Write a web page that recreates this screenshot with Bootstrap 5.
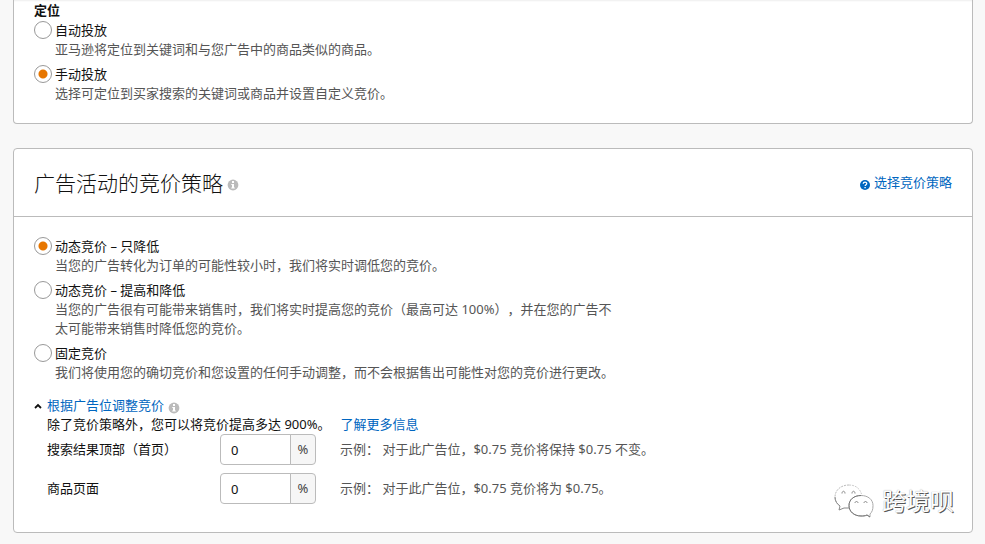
<!DOCTYPE html>
<html lang="zh-CN">
<head>
<meta charset="utf-8">
<meta name="viewport" content="width=device-width, initial-scale=1">
<title>广告活动的竞价策略</title>
<link rel="stylesheet" href="https://cdn.jsdelivr.net/npm/bootstrap@5.3.0/dist/css/bootstrap.min.css">
<style>
body { background: #f8f8f8; color: #111; font: 13px/19px "Noto Sans", "Noto Sans CJK SC", sans-serif; text-spacing-trim: space-all; }
a, .toggle-link { color: #0066c0; text-decoration: none; }
a:hover, .toggle-link:hover { text-decoration: underline; }
.page { padding: 0 12px 11px 13px; }
.panel { border: 1px solid #bbb; border-radius: 4px; background: #fff; color: #111; }
.panel-top { border-top: 0; border-top-left-radius: 0; border-top-right-radius: 0; padding: 1px 20px 14px; box-shadow: inset 0 2px 2px -1px #eee; }
.target-title { font-size: 13px; line-height: 19px; margin-bottom: 1px; }
.panel-head { padding: 0 20px; min-height: 68px; border-bottom: 1px solid #bbb; }
.panel-title { font-size: 21px; line-height: 30px; font-weight: 300; }
.panel-body { padding: 20px 20px 28px; }
.option { display: grid; grid-template-columns: 18px 1fr; column-gap: 3px; margin-bottom: 6px; }
.option .form-check-input { width: 18px; height: 18px; margin: 0; border: 1px solid #999; float: none; }
.option .form-check-input:checked { background: #fff radial-gradient(circle, #e77600 0 4px, #fff 5px); border-color: #999; }
.option .desc { grid-column: 2; max-width: 562px; }
.muted { color: #555; }
.placement { padding-left: 13px; }
.toggle-link { border: 0; background: none; padding: 0; }
.chevron { width: 8px; height: 8px; margin-right: 5px; }
.more-link { margin-left: 10px; }
.bid-row { display: grid; grid-template-columns: 173px 96px 1fr; align-items: center; margin-bottom: 8px; }
.bid-row .form-control, .bid-row .input-group-text { height: 31px; border-color: #bbb; border-radius: 4px; font-size: 13px; line-height: 19px; color: #111; }
.bid-row .form-control { padding: 0 10px; }
.bid-row .input-group-text { width: 26px; padding: 0; justify-content: center; background: #f6f6f6; color: #444; }
.example { padding-left: 24px; }
.watermark { position: absolute; right: 31px; bottom: 26px; font-size: 24px; line-height: 34px; color: #fff; text-shadow: 1px 1px 0 #555, 0 0 1px #999; pointer-events: none; }
</style>
<script defer src="https://cdn.jsdelivr.net/npm/bootstrap@5.3.0/dist/js/bootstrap.bundle.min.js"></script>
</head>
<body>
<main class="page position-relative">
  <section class="panel panel-top mb-4">
    <fieldset>
      <legend class="float-none fw-bold target-title">定位</legend>
      <div class="option">
        <input class="form-check-input" type="radio" name="target" id="auto" aria-describedby="auto-d">
        <label for="auto">自动投放</label>
        <div class="desc muted" id="auto-d">亚马逊将定位到关键词和与您广告中的商品类似的商品。</div>
      </div>
      <div class="option">
        <input class="form-check-input" type="radio" name="target" id="manual" aria-describedby="manual-d" checked>
        <label for="manual">手动投放</label>
        <div class="desc muted" id="manual-d">选择可定位到买家搜索的关键词或商品并设置自定义竞价。</div>
      </div>
    </fieldset>
  </section>

  <section class="panel">
    <header class="panel-head d-flex align-items-center justify-content-between">
      <div class="d-flex align-items-center">
        <h1 class="panel-title mb-0" id="strategy-title">广告活动的竞价策略</h1>
        <svg class="ms-1 mt-1" width="12" height="12" viewBox="0 0 12 12" aria-hidden="true"><circle cx="6" cy="6" r="5.4" fill="#bbb"/><path d="M5 2h2v2H5zM4.300 5H7v3.500h.8v1H4.200v-1H5V6h-.7z" fill="#fff"/></svg>
      </div>
      <a href="#" class="d-flex align-items-center"><svg class="me-1 mt-1" width="10" height="10" viewBox="0 0 10 10" aria-hidden="true"><circle cx="5" cy="5" r="5" fill="#0066c0"/><path d="M3.200 3.800C3.300 1.500 6.900 1.700 6.700 3.700 6.600 4.700 5.100 4.700 5.100 6.100" fill="none" stroke="#fff" stroke-width="1.300"/><path d="M4.400 7h1.400v1.300H4.400z" fill="#fff"/></svg>选择竞价策略</a>
    </header>
    <div class="panel-body">
      <div role="radiogroup" aria-labelledby="strategy-title">
        <div class="option">
          <input class="form-check-input" type="radio" name="bid" id="down" aria-describedby="down-d" checked>
          <label for="down">动态竞价 – 只降低</label>
          <div class="desc muted" id="down-d">当您的广告转化为订单的可能性较小时，我们将实时调低您的竞价。</div>
        </div>
        <div class="option">
          <input class="form-check-input" type="radio" name="bid" id="updown" aria-describedby="updown-d">
          <label for="updown">动态竞价 – 提高和降低</label>
          <div class="desc muted" id="updown-d">当您的广告很有可能带来销售时，我们将实时提高您的竞价（最高可达 100%），并在您的广告不太可能带来销售时降低您的竞价。</div>
        </div>
        <div class="option">
          <input class="form-check-input" type="radio" name="bid" id="fixed" aria-describedby="fixed-d">
          <label for="fixed">固定竞价</label>
          <div class="desc muted" id="fixed-d">我们将使用您的确切竞价和您设置的任何手动调整，而不会根据售出可能性对您的竞价进行更改。</div>
        </div>
      </div>
      <div class="d-flex align-items-center pt-2">
        <button type="button" class="toggle-link d-flex align-items-center" data-bs-toggle="collapse" data-bs-target="#placement" aria-expanded="true" aria-controls="placement"><svg class="chevron" viewBox="0 0 8 8" aria-hidden="true"><path d="M1 6l3-3 3 3" fill="none" stroke="#111" stroke-width="1.800"/></svg>根据广告位调整竞价</button>
        <svg class="ms-1 mt-1" width="12" height="12" viewBox="0 0 12 12" aria-hidden="true"><circle cx="6" cy="6" r="5.400" fill="#bbb"/><path d="M5 2h2v2H5zM4.300 5H7v3.500h.8v1H4.200v-1H5V6h-.7z" fill="#fff"/></svg>
      </div>
      <div id="placement" class="placement collapse show">
        <div>除了竞价策略外，您可以将竞价提高多达 900%。<a href="#" class="more-link">了解更多信息</a></div>
        <div class="bid-row">
          <label for="top">搜索结果顶部（首页）</label>
          <div class="input-group flex-nowrap"><input class="form-control" id="top" type="text" inputmode="numeric" value="0"><span class="input-group-text">%</span></div>
          <div class="example muted">示例： 对于此广告位，$0.75 竞价将保持 $0.75 不变。</div>
        </div>
        <div class="bid-row mb-0">
          <label for="product">商品页面</label>
          <div class="input-group flex-nowrap"><input class="form-control" id="product" type="text" inputmode="numeric" value="0"><span class="input-group-text">%</span></div>
          <div class="example muted">示例： 对于此广告位，$0.75 竞价将为 $0.75。</div>
        </div>
      </div>
    </div>
  </section>
  <div class="watermark d-flex align-items-center">
    <svg class="me-2" width="40" height="34" viewBox="0 0 40 34" aria-hidden="true" fill="#fff" stroke="#888" stroke-width="1"><path d="M15 1C7 1 1 6 1 13c0 4 2 7 5 9" stroke="#bbb" stroke-dasharray="2 1"/><path d="M15 1c7 0 11 4 12.500 9" stroke="#ccc" stroke-dasharray="2 1"/><path d="M1 13c0 4 2 7 5 9L5 26l5-2h6" fill="none"/><path d="M8 9.500c0-3 3-3 3 0M18 9.500c0-3 3-3 3 0" fill="none"/><path d="M27 11.500c-7 0-12 4-12 10S20 32 27 32c2 0 4 0 6-1l3 2v-3c2-2 3-4 3-8.500 0-6-5-10-12-10z" stroke="#aaa"/><path d="M27 11.500c-7 0-12 4-12 10S20 32 27 32c2 0 4 0 6-1l3 2" fill="none" stroke="#777"/><path d="M21 19c0-2 3-2 3 0M30 19c0-2 3-2 3 0" fill="none"/></svg>
    <span>跨境呗</span>
  </div>
</main>
</body>
</html>
